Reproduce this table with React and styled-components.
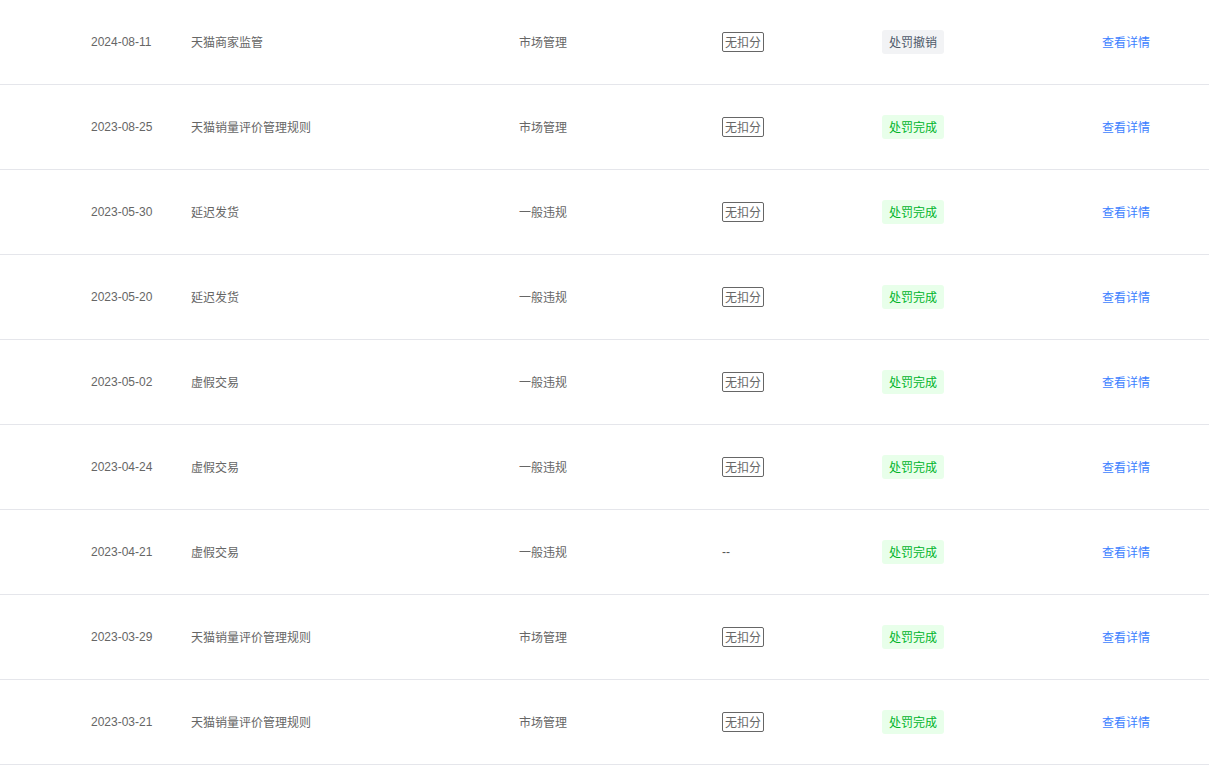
import styled, { createGlobalStyle } from "styled-components";

const GlobalStyle = createGlobalStyle`
  body {
    margin: 0;
    background: #ffffff;
    font-family: "Noto Sans CJK SC", "Liberation Sans", sans-serif;
  }
`;

const records = [
  { date: "2024-08-11", name: "天猫商家监管", type: "市场管理", score: "无扣分", status: "revoked" },
  { date: "2023-08-25", name: "天猫销量评价管理规则", type: "市场管理", score: "无扣分", status: "done" },
  { date: "2023-05-30", name: "延迟发货", type: "一般违规", score: "无扣分", status: "done" },
  { date: "2023-05-20", name: "延迟发货", type: "一般违规", score: "无扣分", status: "done" },
  { date: "2023-05-02", name: "虚假交易", type: "一般违规", score: "无扣分", status: "done" },
  { date: "2023-04-24", name: "虚假交易", type: "一般违规", score: "无扣分", status: "done" },
  { date: "2023-04-21", name: "虚假交易", type: "一般违规", score: null, status: "done" },
  { date: "2023-03-29", name: "天猫销量评价管理规则", type: "市场管理", score: "无扣分", status: "done" },
  { date: "2023-03-21", name: "天猫销量评价管理规则", type: "市场管理", score: "无扣分", status: "done" },
];

export default function App() {
  return (
    <>
      <GlobalStyle />
      <List>
        {records.map((r, i) => (
          <Row key={i}>
            <DateCell>{r.date}</DateCell>
            <Cell>{r.name}</Cell>
            <Cell>{r.type}</Cell>
            <Cell>{r.score ? <ScoreTag>{r.score}</ScoreTag> : <Dash>--</Dash>}</Cell>
            <Cell>
              <Status $kind={r.status}>
                {r.status === "revoked" ? "处罚撤销" : "处罚完成"}
              </Status>
            </Cell>
            <Cell>
              <DetailLink href="#">查看详情</DetailLink>
            </Cell>
          </Row>
        ))}
      </List>
    </>
  );
}

const List = styled.div`
  width: 100%;
`;

const Row = styled.div`
  display: grid;
  grid-template-columns: 100px 328px 203px 160px 220px 1fr;
  align-items: center;
  height: 84px;
  padding-left: 91px;
  border-bottom: 1px solid #e5e6eb;
`;

const Cell = styled.div`
  font-size: 12px;
  line-height: 20px;
  color: #666666;
  display: flex;
  align-items: center;
`;

const DateCell = styled(Cell)`
  font-family: "Liberation Sans", "Noto Sans CJK SC", sans-serif;
  color: #666666;
`;

const ScoreTag = styled.span`
  display: inline-block;
  box-sizing: border-box;
  height: 20px;
  padding: 0 2px;
  border: 1px solid #666666;
  border-radius: 2px;
  font-size: 12px;
  line-height: 18px;
  color: #666666;
`;

const Dash = styled.span`
  color: #555555;
  font-family: "Liberation Sans", sans-serif;
`;

const Status = styled.span`
  display: inline-block;
  height: 24px;
  padding: 0 7px;
  border-radius: 3px;
  font-size: 12px;
  line-height: 24px;
  background: ${(p) => (p.$kind === "revoked" ? "#f2f3f5" : "#e8ffea")};
  color: ${(p) => (p.$kind === "revoked" ? "#4e5969" : "#00b42a")};
`;

const DetailLink = styled.a`
  font-size: 12px;
  color: #3d7fff;
  text-decoration: none;
`;
